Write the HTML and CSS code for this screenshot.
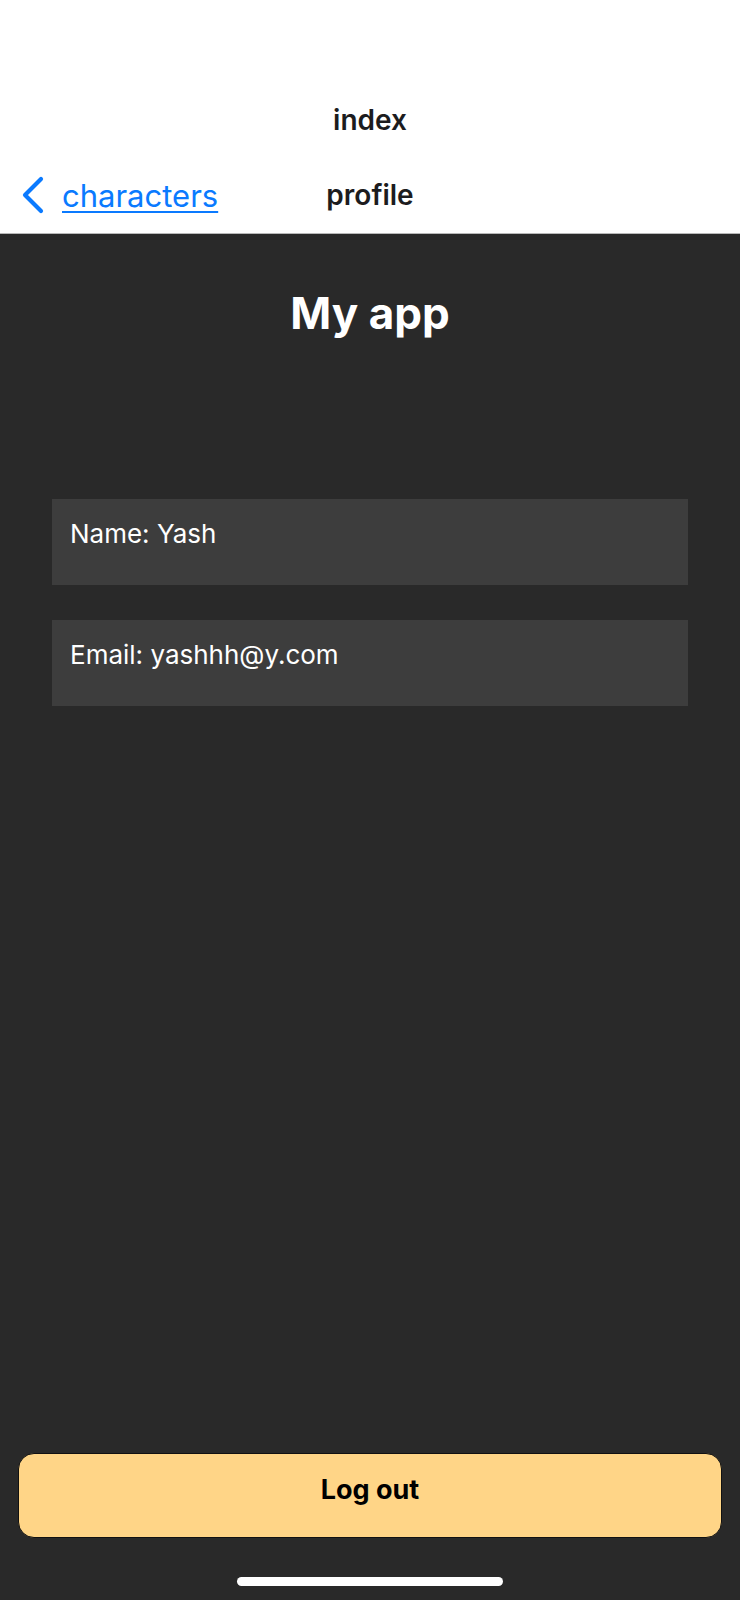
FILE: index.html
```html
<!DOCTYPE html>
<html lang="en">
<head>
<meta charset="utf-8">
<title>profile</title>
<link rel="stylesheet" href="styles.css">
</head>
<body>
<div class="screen">
  <header class="header">
    <div class="title-row"><span class="title-top">index</span></div>
    <div class="nav-row">
      <a class="back" href="#">
        <svg class="chev" width="26" height="38" viewBox="0 0 26 38"><path d="M21 3 L5 19 L21 35" fill="none" stroke="#0a7aff" stroke-width="4.2" stroke-linecap="round" stroke-linejoin="round"/></svg>
        <span class="back-label">characters</span>
      </a>
      <span class="nav-title">profile</span>
      <span></span>
    </div>
  </header>
  <main class="content">
    <h1 class="app-title">My app</h1>
    <div class="fields">
      <div class="field">Name: Yash</div>
      <div class="field">Email: yashhh@y.com</div>
    </div>
    <div class="spacer"></div>
    <button class="logout">Log out</button>
    <div class="home-wrap"><div class="home-indicator"></div></div>
  </main>
</div>
</body>
</html>
```

FILE: styles.css
```css
html, body {
  margin: 0;
  padding: 0;
}
body {
  font-family: Inter, "Noto Sans", "Liberation Sans", sans-serif;
  background: #292929;
}
.screen {
  width: 740px;
  height: 1600px;
  display: flex;
  flex-direction: column;
}
.header {
  background: #ffffff;
  height: 234px;
  box-sizing: border-box;
  border-bottom: 1px solid #b8b8b8;
  display: flex;
  flex-direction: column;
  padding-top: 96px;
}
.title-row {
  display: flex;
  justify-content: center;
  height: 48px;
  align-items: center;
}
.title-top {
  font-size: 28px;
  font-weight: 600;
  color: #1c1c1e;
}
.nav-row {
  display: grid;
  grid-template-columns: 1fr auto 1fr;
  align-items: center;
  height: 60px;
  margin-top: 21px;
}
.back {
  display: flex;
  align-items: center;
  gap: 16px;
  padding-left: 20px;
  color: #0a7aff;
  text-decoration: none;
}
.chev {
  display: block;
}
.back-label {
  font-size: 31px;
  text-decoration: underline;
  text-underline-offset: 4px;
  text-decoration-thickness: 2px;
}
.nav-title {
  font-size: 28px;
  font-weight: 600;
  color: #1c1c1e;
}
.content {
  flex: 1;
  display: flex;
  flex-direction: column;
  align-items: stretch;
}
.app-title {
  margin: 51px 0 0;
  text-align: center;
  color: #ffffff;
  font-size: 44px;
  font-weight: 700;
  line-height: 56px;
}
.fields {
  margin: 158px 52px 0;
  display: flex;
  flex-direction: column;
  gap: 35px;
}
.field {
  background: #3d3d3d;
  height: 86px;
  box-sizing: border-box;
  padding: 18px 18px 0;
  color: #ffffff;
  font-size: 26px;
  line-height: 34px;
}
.spacer {
  flex: 1;
}
.logout {
  margin: 0 18px;
  height: 85px;
  padding: 0 0 12px;
  background: #ffd587;
  border: 1.5px solid #111111;
  border-radius: 16px;
  font-family: Inter, "Noto Sans", "Liberation Sans", sans-serif;
  font-size: 27px;
  font-weight: 700;
  color: #000000;
}
.home-wrap {
  height: 62px;
  display: flex;
  justify-content: center;
  align-items: flex-start;
  padding-top: 39px;
  box-sizing: border-box;
}
.home-indicator {
  width: 266px;
  height: 9px;
  border-radius: 5px;
  background: #ffffff;
}
```
